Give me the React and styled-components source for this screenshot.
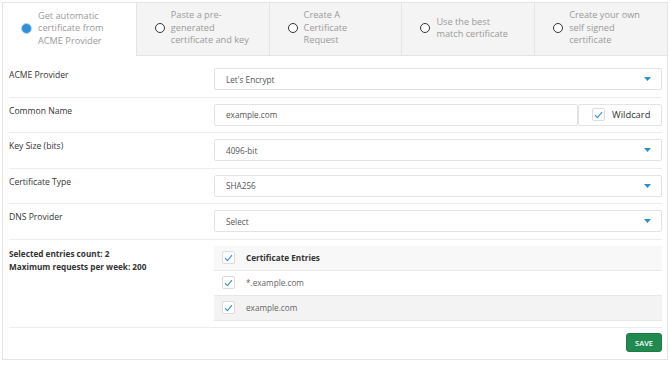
import React from 'react';
import styled, { createGlobalStyle } from 'styled-components';

const GlobalStyle = createGlobalStyle`
  body {
    margin: 0;
    background: #fff;
    font-family: "Open Sans", "Liberation Sans", sans-serif;
  }
`;

const tabs = [
  'Get automatic certificate from ACME Provider',
  'Paste a pre-generated certificate and key',
  'Create A Certificate Request',
  'Use the best match certificate',
  'Create your own self signed certificate',
];

const rows = [
  { label: 'ACME Provider', value: "Let's Encrypt" },
  { label: 'Common Name', value: 'example.com', input: true },
  { label: 'Key Size (bits)', value: '4096-bit' },
  { label: 'Certificate Type', value: 'SHA256' },
  { label: 'DNS Provider', value: 'Select' },
];

const entries = ['*.example.com', 'example.com'];

function Check() {
  return (
    <CheckBox>
      <svg width="9" height="8" viewBox="0 0 9 8">
        <path d="M1 4.2 L3.4 6.6 L8 1.2" fill="none" stroke="#3b8fdb" strokeWidth="1.1" />
      </svg>
    </CheckBox>
  );
}

function Arrow() {
  return (
    <svg width="7" height="4" viewBox="0 0 7 4">
      <path d="M0 0 H7 L3.5 4 Z" fill="#2e8ccc" />
    </svg>
  );
}

function App() {
  return (
    <>
      <GlobalStyle />
      <Page>
        <Panel>
          <Tabs>
            {tabs.map((t, i) => (
              <Tab key={t} $active={i === 0}>
                <Radio $active={i === 0} />
                <TabText>{t}</TabText>
              </Tab>
            ))}
          </Tabs>
          <Form>
            {rows.map((r) => (
              <Row key={r.label}>
                <Label>{r.label}</Label>
                <Control>
                  {r.input ? (
                    <>
                      <Field>{r.value}</Field>
                      <Wildcard>
                        <Check />
                        <span>Wildcard</span>
                      </Wildcard>
                    </>
                  ) : (
                    <Field>
                      {r.value}
                      <Arrow />
                    </Field>
                  )}
                </Control>
              </Row>
            ))}
            <Row>
              <Info>
                <div>Selected entries count: 2</div>
                <div>Maximum requests per week: 200</div>
              </Info>
              <Control>
                <Table>
                  <Entry $bg="#f8f8f8" $head>
                    <Check />
                    <span>Certificate Entries</span>
                  </Entry>
                  {entries.map((e, i) => (
                    <Entry key={e} $bg={i === 1 ? '#f3f3f3' : '#fff'}>
                      <Check />
                      <span>{e}</span>
                    </Entry>
                  ))}
                </Table>
              </Control>
            </Row>
            <Footer>
              <SaveButton>SAVE</SaveButton>
            </Footer>
          </Form>
        </Panel>
      </Page>
    </>
  );
}

const Page = styled.div`
  padding: 2px;
  width: 667px;
`;

const Panel = styled.div`
  border: 1px solid #e4e4e4;
  border-top: none;
  width: 666px;
  height: 358px;
  box-sizing: border-box;
`;

const Tabs = styled.div`
  display: grid;
  grid-template-columns: repeat(5, 1fr);
  height: 54px;
`;

const Tab = styled.div`
  display: flex;
  align-items: center;
  gap: 6px;
  padding: 0 6px 2px 18px;
  background: ${(p) => (p.$active ? '#fff' : '#f4f4f4')};
  border-top: 1px solid #e4e4e4;
  border-left: ${(p) => (p.$active ? 'none' : '1px solid #e4e4e4')};
  border-bottom: ${(p) => (p.$active ? 'none' : '1px solid #e4e4e4')};
`;

const Radio = styled.span`
  flex: none;
  width: ${(p) => (p.$active ? '9px' : '8px')};
  height: ${(p) => (p.$active ? '9px' : '8px')};
  border-radius: 50%;
  box-sizing: content-box;
  ${(p) =>
    p.$active
      ? 'background: #2f8fd8; border: 1.5px solid #bcdaf2;'
      : 'background: #fff; border: 1.5px solid #333;'}
`;

const TabText = styled.span`
  font-size: 9.2px;
  line-height: 12.5px;
  color: #9a9a9a;
  max-width: 80px;
`;

const Form = styled.div`
  padding: 6px 5px 0 6px;
`;

const Row = styled.div`
  display: flex;
  padding: 6px 0 6.5px;
  border-bottom: 1px solid #eeeeee;
`;

const Label = styled.div`
  width: 205px;
  flex: none;
  font-size: 8.6px;
  color: #333;
  padding-top: 1px;
`;

const Info = styled(Label)`
  font-weight: 700;
  font-size: 8.2px;
  line-height: 13px;
  padding-top: 1px;
`;

const Control = styled.div`
  flex: 1;
  display: flex;
`;

const Field = styled.div`
  flex: 1;
  height: 22px;
  box-sizing: border-box;
  display: flex;
  align-items: center;
  justify-content: space-between;
  padding: 0 10px 0 11px;
  border: 1px solid #e3e3e3;
  border-radius: 2px;
  font-size: 8.2px;
  color: #555;
`;

const Wildcard = styled.div`
  width: 84px;
  height: 22px;
  box-sizing: border-box;
  display: flex;
  align-items: center;
  gap: 7px;
  padding-left: 13px;
  border: 1px solid #e3e3e3;
  border-radius: 2px;
  font-size: 9.4px;
  color: #333;
`;

const CheckBox = styled.span`
  flex: none;
  width: 11px;
  height: 11px;
  border: 1px solid #dcdcdc;
  border-radius: 2px;
  background: #fff;
  display: flex;
  align-items: center;
  justify-content: center;
`;

const Table = styled.div`
  flex: 1;
  display: flex;
  flex-direction: column;
`;

const Entry = styled.div`
  height: 25px;
  box-sizing: border-box;
  display: flex;
  align-items: center;
  gap: 11px;
  padding-left: 8px;
  background: ${(p) => p.$bg};
  border-bottom: 1px solid #e8e8e8;
  font-size: 8.2px;
  color: ${(p) => (p.$head ? '#333' : '#666')};
  font-weight: ${(p) => (p.$head ? 700 : 400)};
`;

const Footer = styled.div`
  display: flex;
  justify-content: flex-end;
  padding-top: 5px;
`;

const SaveButton = styled.button`
  background: #218b4f;
  color: #fff;
  border: 1px solid #1c7a44;
  border-radius: 3px;
  font-family: inherit;
  font-size: 7.5px;
  font-weight: 600;
  height: 19px;
  padding: 0 8px;
`;

export default App;
